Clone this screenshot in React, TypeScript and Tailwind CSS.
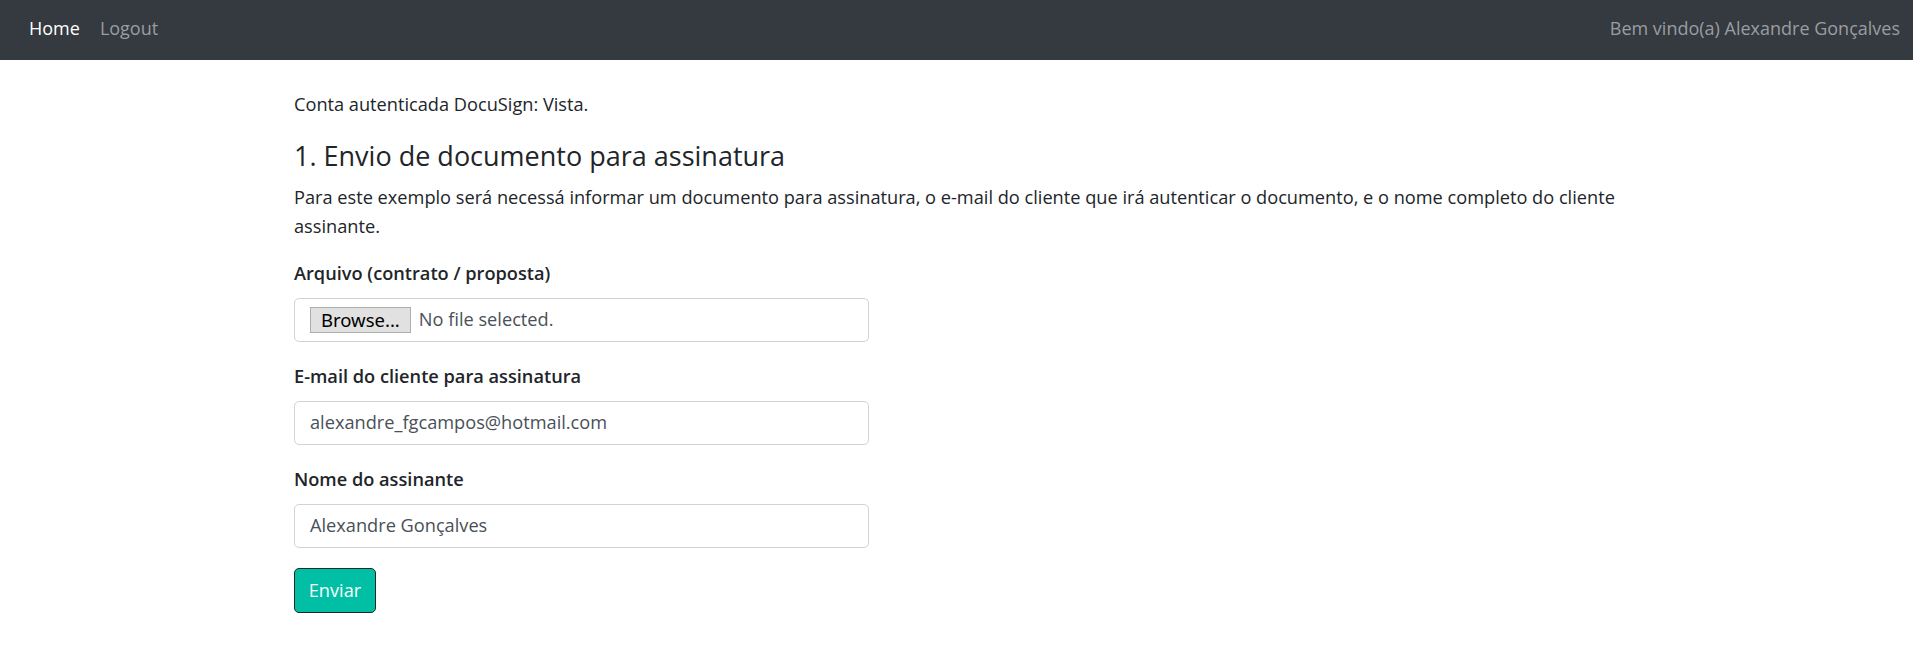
export default function App() {
  return (
    <div className="min-h-screen bg-white font-['Open_Sans',sans-serif] text-[#212529]">
      <nav className="h-[60px] bg-[#343a40] flex items-center justify-between pl-[29px] pr-[13px] pb-[4px] text-[18px]">
        <div className="flex items-center gap-[20px]">
          <a className="text-white">Home</a>
          <a className="text-[#9a9da0]">Logout</a>
        </div>
        <span className="text-[#9a9da0]">Bem vindo(a) Alexandre Gonçalves</span>
      </nav>
      <main className="pl-[294px] pt-[30px]">
        <div className="w-[1332px]">
          <p className="text-[18.2px] leading-[29px] mb-[19px]">Conta autenticada DocuSign: Vista.</p>
          <h4 className="text-[27px] leading-[35px] mb-[10px] font-normal">1. Envio de documento para assinatura</h4>
          <p className="text-[18.2px] leading-[29px] mb-[18px]">
            Para este exemplo será necessá informar um documento para assinatura, o e-mail do cliente que irá autenticar o documento, e o nome completo do cliente assinante.
          </p>

          <div className="mb-[20px]">
            <label className="block text-[18.2px] leading-[29px] font-semibold mb-[10px]">Arquivo (contrato / proposta)</label>
            <div className="w-[575px] h-[44px] border border-[#ced4da] rounded-[5px] flex items-center pl-[15px]">
              <span className="h-[26px] px-[10px] border border-[#adadad] bg-[#e1e1e1] text-black text-[18.5px] leading-[24px] font-['Noto_Sans',sans-serif]">Browse...</span>
              <span className="ml-[8px] text-[18.2px] text-[#495057]">No file selected.</span>
            </div>
          </div>

          <div className="mb-[20px]">
            <label className="block text-[18.2px] leading-[29px] font-semibold mb-[10px]">E-mail do cliente para assinatura</label>
            <div className="w-[575px] h-[44px] border border-[#ced4da] rounded-[5px] flex items-center pl-[15px] text-[18.2px] text-[#495057]">
              alexandre_fgcampos@hotmail.com
            </div>
          </div>

          <div className="mb-[20px]">
            <label className="block text-[18.2px] leading-[29px] font-semibold mb-[10px]">Nome do assinante</label>
            <div className="w-[575px] h-[44px] border border-[#ced4da] rounded-[5px] flex items-center pl-[15px] text-[18.2px] text-[#495057]">
              Alexandre Gonçalves
            </div>
          </div>

          <button className="h-[45px] w-[82px] bg-[#00bfa5] border border-[#1b2a28] rounded-[5px] text-white text-[18.2px] flex items-center justify-center">
            Enviar
          </button>
        </div>
      </main>
    </div>
  );
}
